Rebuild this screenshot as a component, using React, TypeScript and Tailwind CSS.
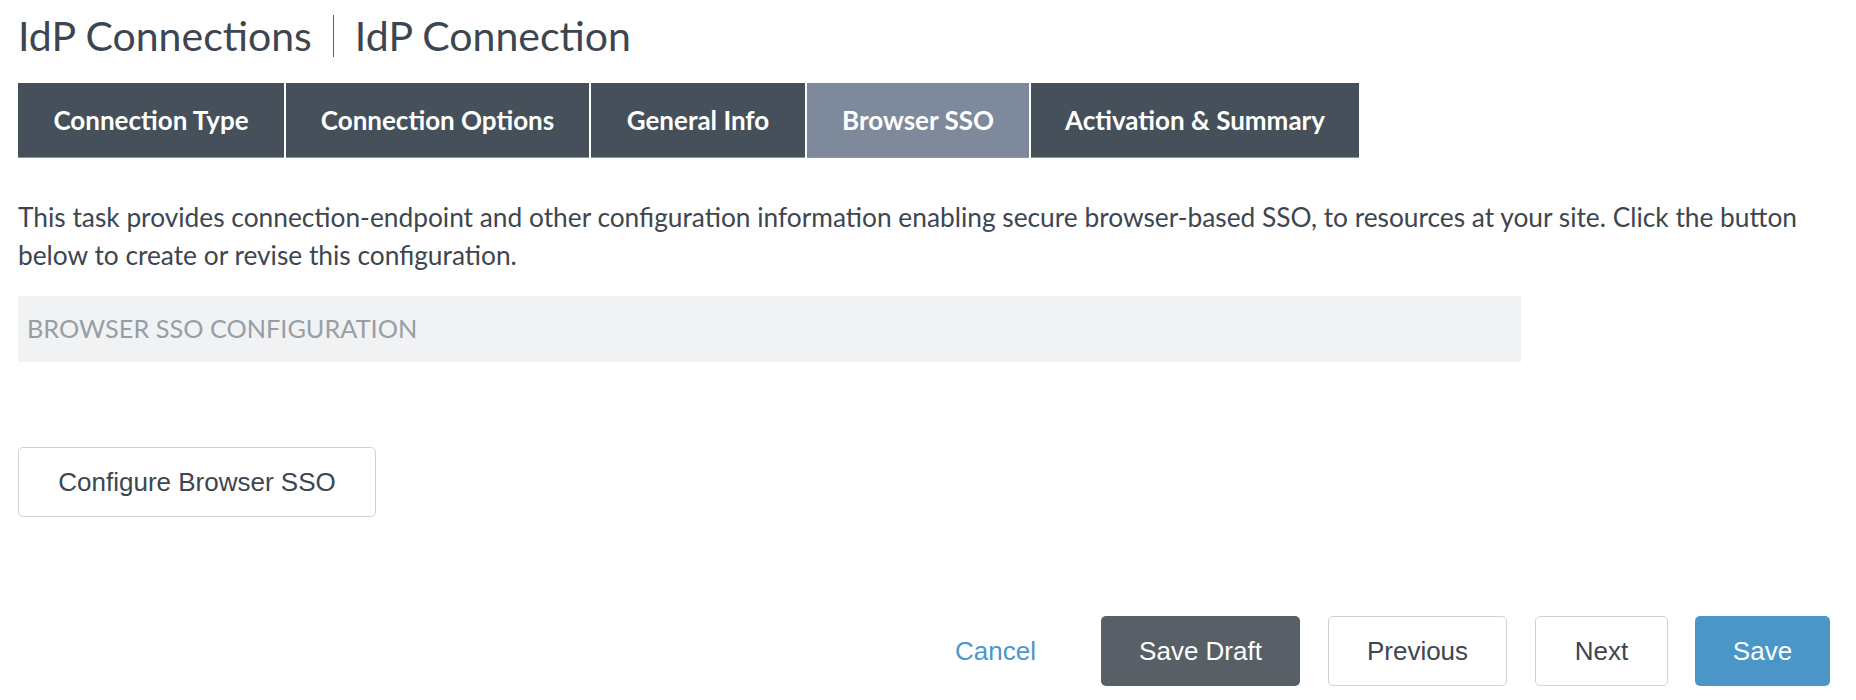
const tabs = [
  { label: "Connection Type", width: "w-[266px]" },
  { label: "Connection Options", width: "w-[303px]" },
  { label: "General Info", width: "w-[214px]" },
  { label: "Browser SSO", width: "w-[222px]", active: true },
  { label: "Activation & Summary", width: "w-[328px]" },
];

const sans = "font-['Lato','Open_Sans',sans-serif]";
const helv = "font-['Liberation_Sans','Arial',sans-serif]";

export default function App() {
  return (
    <div className={`min-h-[700px] bg-white px-[18px] pt-[12px] text-[#3d4650] ${sans}`}>
      <h1 className="flex h-[48px] items-center text-[41px] font-normal leading-[48px]">
        <span>IdP Connections</span>
        <span aria-hidden="true" className="mx-[21px] h-[42px] w-px bg-[#5b636c]" />
        <span>IdP Connection</span>
      </h1>

      <nav className="mt-[23px] flex gap-[2px]">
        {tabs.map((tab) => (
          <div
            key={tab.label}
            className={`flex h-[75px] items-center justify-center border-b border-[#8d97a2] text-[26px] font-bold text-white ${tab.width} ${
              tab.active ? "bg-[#7e8a9b]" : "bg-[#45505a]"
            }`}
          >
            {tab.label}
          </div>
        ))}
      </nav>

      <p className="mt-[40px] text-[26.3px] leading-[38px]">
        This task provides connection-endpoint and other configuration information enabling secure browser-based SSO, to
        resources at your site. Click the button below to create or revise this configuration.
      </p>

      <div className="mt-[22px] flex h-[66px] w-[1503px] items-center bg-[#f1f2f4] px-[9px] text-[25.3px] uppercase text-[#979ea5]">
        Browser SSO Configuration
      </div>

      <button
        type="button"
        className={`mt-[85px] block h-[70px] w-[358px] rounded-[5px] border border-[#cfd3d7] bg-white text-[26px] text-[#3d4650] ${helv}`}
      >
        Configure Browser SSO
      </button>

      <div className={`mt-[99px] flex items-center justify-end pr-[8px] text-[26px] ${helv}`}>
        <button type="button" className="mr-[65px] text-[#4a98cb]">
          Cancel
        </button>
        <button type="button" className="h-[70px] w-[199px] rounded-[5px] bg-[#585f67] text-white">
          Save Draft
        </button>
        <button type="button" className="ml-[28px] h-[70px] w-[179px] rounded-[5px] border border-[#cfd3d7] bg-white text-[#3d4650]">
          Previous
        </button>
        <button type="button" className="ml-[28px] h-[70px] w-[133px] rounded-[5px] border border-[#cfd3d7] bg-white text-[#3d4650]">
          Next
        </button>
        <button type="button" className="ml-[27px] h-[70px] w-[135px] rounded-[5px] bg-[#4a96c8] text-white">
          Save
        </button>
      </div>
    </div>
  );
}
